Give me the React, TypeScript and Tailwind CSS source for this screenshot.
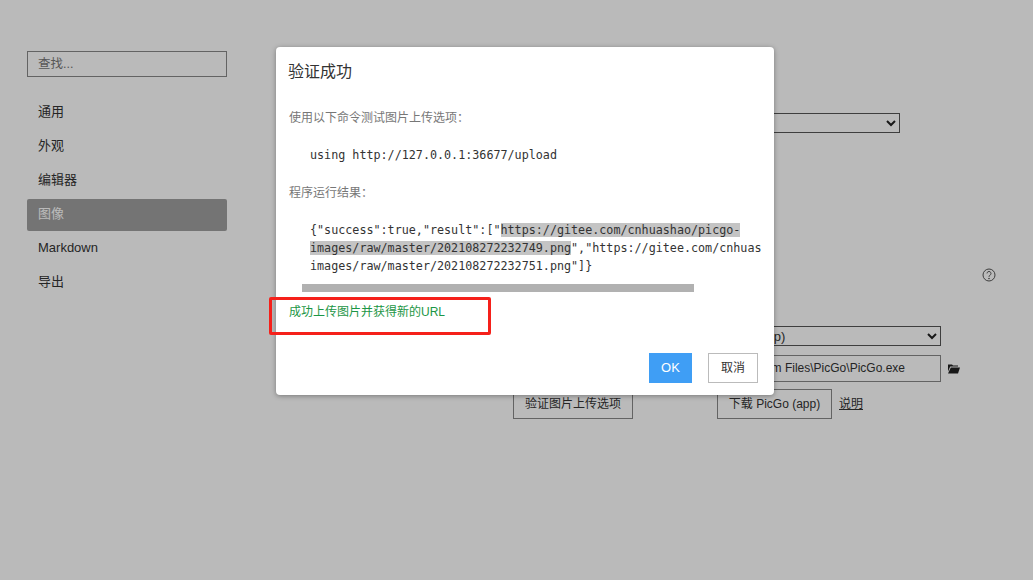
const uiFont = "font-['Liberation_Sans','Noto_Sans_CJK_SC',sans-serif]";
const navItems = ['通用', '外观', '编辑器', '图像', 'Markdown', '导出'];

function Sidebar() {
  return (
    <aside className="w-[200px] ml-[27px] pt-[51px] shrink-0">
      <div className="h-[26px] border border-[#888] px-[10px] text-[12.5px] leading-[24px] text-[#777]">查找...</div>
      <nav className="mt-[17px] flex flex-col">
        {navItems.map((item) => (
          <div
            key={item}
            className={
              item === '图像'
                ? 'mt-[3px] -mb-[1px] h-[32px] px-[11px] text-[13px] leading-[30px] rounded-[2px] bg-[#a0a0a0] text-white'
                : 'h-[34px] px-[11px] text-[13px] leading-[35px] text-[#333]'
            }
          >
            {item}
          </div>
        ))}
      </nav>
    </aside>
  );
}

function Settings() {
  return (
    <main className="flex-1 pl-[286px] pt-[113px] text-[12px] text-[#333]">
      <div className="h-[20px] w-[387px] border border-[#555] flex items-center justify-end pr-[3px]">
        <ChevronDown />
      </div>
      <div className="mt-[135px] w-[483px] flex justify-end">
        <svg width="14" height="14" viewBox="0 0 14 14" fill="none" stroke="#555" strokeWidth="1">
          <circle cx="7" cy="7" r="6" />
          <path d="M5 5.4a2 2 0 1 1 3 1.8c-.7.4-1 .8-1 1.6" />
          <circle cx="7" cy="10.6" r=".4" fill="#555" />
        </svg>
      </div>
      <div className="mt-[44px] ml-[204px] h-[20px] w-[224px] border border-[#555] flex items-center justify-between pr-[3px] leading-none">
        <span className="-ml-[2px] text-[13px]">PicGo (app)</span>
        <ChevronDown />
      </div>
      <div className="mt-[9px] ml-[204px] flex items-center">
        <div className="h-[27px] w-[224px] border border-[#888] pr-[35px] text-right leading-[25px] whitespace-nowrap">C:\Program Files\PicGo\PicGo.exe</div>
        <svg className="ml-[7px]" width="12" height="11" viewBox="0 0 12 10" fill="#222">
          <path d="M0 1h4l1 1h5v1H2.2L0 8z" />
          <path d="M2.8 4H12l-2 6H0z" />
        </svg>
      </div>
      <div className="mt-[7px] flex items-center">
        <div className="h-[30px] w-[120px] border border-[#888] text-center leading-[28px]">验证图片上传选项</div>
        <div className="ml-[84px] h-[30px] w-[115px] border border-[#888] text-center leading-[28px]">下载 PicGo (app)</div>
        <span className="ml-[7px] underline">说明</span>
      </div>
    </main>
  );
}

function ChevronDown() {
  return (
    <svg width="10" height="7" viewBox="0 0 10 7" fill="none" stroke="#222" strokeWidth="2">
      <path d="M1 1l4 4 4-4" />
    </svg>
  );
}

function VerifyDialog() {
  const mono = "font-['DejaVu_Sans_Mono',monospace] text-[11.72px] leading-[18px] text-[#333]";
  return (
    <div className="absolute left-[276px] top-[47px] w-[498px] h-[348px] bg-white rounded-[4px] shadow-[0_1px_5px_rgba(0,0,0,0.35)] px-[13px]">
      <h2 className="pt-[13px] text-[16px] leading-[24px] font-normal text-[#333] -ml-[1px]">验证成功</h2>
      <p className="mt-[25px] text-[12px] leading-[18px] text-[#777]">使用以下命令测试图片上传选项：</p>
      <pre className={`mt-[19px] pl-[21px] ${mono}`}>using http://127.0.0.1:36677/upload</pre>
      <p className="mt-[20px] text-[12px] leading-[18px] text-[#777]">程序运行结果：</p>
      <div className="mt-[19px] w-[472px] overflow-hidden">
        <pre className={`pl-[21px] whitespace-pre ${mono}`}>
          {'{"success":true,"result":["'}
          <span className="bg-[#c4c4c4]">https://gitee.com/cnhuashao/picgo-</span>
          {'\n'}
          <span className="bg-[#c4c4c4]">images/raw/master/202108272232749.png</span>
          {'","https://gitee.com/cnhuashao/picgo-\nimages/raw/master/202108272232751.png"]}'}
        </pre>
      </div>
      <div className="mt-[9px] ml-[13px] h-[8px] w-[392px] bg-[#b1b1b1]" />
      <p className="mt-[11px] text-[12px] leading-[18px] text-[#1c9645]">成功上传图片并获得新的URL</p>
      <div className="absolute right-[16px] bottom-[12px] flex gap-[16px]">
        <button className="h-[30px] w-[43px] bg-[#3f9ef5] text-white text-[13px]">OK</button>
        <button className="h-[30px] w-[50px] border border-[#bbb] bg-white text-[12px] text-[#333]">取消</button>
      </div>
    </div>
  );
}

export default function App() {
  return (
    <div className={`relative h-[580px] w-[1033px] overflow-hidden bg-white flex ${uiFont}`}>
      <Sidebar />
      <Settings />
      <div className="absolute inset-0 bg-black/[0.27]" />
      <VerifyDialog />
      <div className="absolute left-[269px] top-[297px] w-[222px] h-[38px] border-[3px] border-[#f5201a] rounded-[2px]" />
    </div>
  );
}
